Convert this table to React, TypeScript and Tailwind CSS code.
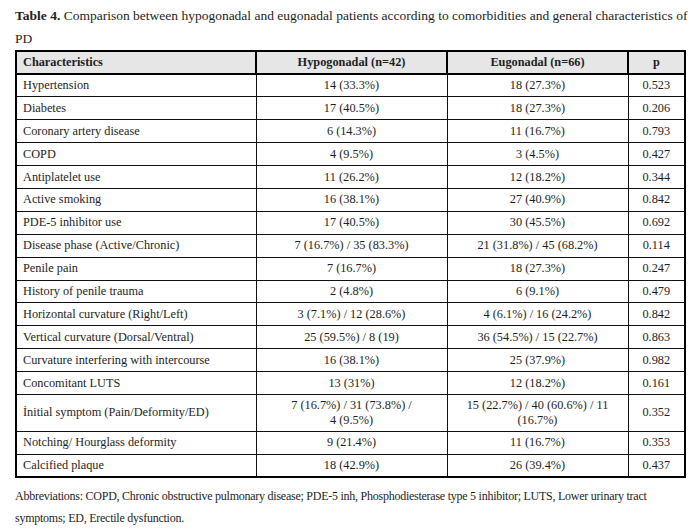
import React from "react";

type Row = [string, React.ReactNode, React.ReactNode, string];

const rows: Row[] = [
  ["Hypertension", "14 (33.3%)", "18 (27.3%)", "0.523"],
  ["Diabetes", "17 (40.5%)", "18 (27.3%)", "0.206"],
  ["Coronary artery disease", "6 (14.3%)", "11 (16.7%)", "0.793"],
  ["COPD", "4 (9.5%)", "3 (4.5%)", "0.427"],
  ["Antiplatelet use", "11 (26.2%)", "12 (18.2%)", "0.344"],
  ["Active smoking", "16 (38.1%)", "27 (40.9%)", "0.842"],
  ["PDE-5 inhibitor use", "17 (40.5%)", "30 (45.5%)", "0.692"],
  ["Disease phase (Active/Chronic)", "7 (16.7%) / 35 (83.3%)", "21 (31.8%) / 45 (68.2%)", "0.114"],
  ["Penile pain", "7 (16.7%)", "18 (27.3%)", "0.247"],
  ["History of penile trauma", "2 (4.8%)", "6 (9.1%)", "0.479"],
  ["Horizontal curvature (Right/Left)", "3 (7.1%) / 12 (28.6%)", "4 (6.1%) / 16 (24.2%)", "0.842"],
  ["Vertical curvature (Dorsal/Ventral)", "25 (59.5%) / 8 (19)", "36 (54.5%) / 15 (22.7%)", "0.863"],
  ["Curvature interfering with intercourse", "16 (38.1%)", "25 (37.9%)", "0.982"],
  ["Concomitant LUTS", "13 (31%)", "12 (18.2%)", "0.161"],
  [
    "İnitial symptom (Pain/Deformity/ED)",
    <>7 (16.7%) / 31 (73.8%) /<br />4 (9.5%)</>,
    <>15 (22.7%) / 40 (60.6%) / 11<br />(16.7%)</>,
    "0.352",
  ],
  ["Notching/ Hourglass deformity", "9 (21.4%)", "11 (16.7%)", "0.353"],
  ["Calcified plaque", "18 (42.9%)", "26 (39.4%)", "0.437"],
];

export default function App() {
  return (
    <div
      className="w-[700px] h-[531px] bg-white text-[#1e1e1e] pl-[15px] pt-[4px]"
      style={{ fontFamily: '"Liberation Serif", "Times New Roman", serif' }}
    >
      <p className="w-[678px] text-[13.5px] leading-[23px]">
        <span className="font-bold">Table 4.</span> Comparison between hypogonadal and eugonadal patients according to comorbidities and general characteristics of PD
      </p>
      <table className="mt-0 w-[669px] border-collapse border-2 border-black text-[12.3px] table-fixed">
        <colgroup>
          <col className="w-[240px]" />
          <col className="w-[191px]" />
          <col className="w-[181px]" />
          <col className="w-[57px]" />
        </colgroup>
        <thead>
          <tr className="bg-[#e6e6e6] font-bold">
            <th className="border-2 border-black h-[23px] px-[6px] text-left leading-[15px]">Characteristics</th>
            <th className="border-2 border-black px-[6px] text-center leading-[15px]">Hypogonadal (n=42)</th>
            <th className="border-2 border-black px-[6px] text-center leading-[15px]">Eugonadal (n=66)</th>
            <th className="border-2 border-black px-[6px] text-center leading-[15px]">p</th>
          </tr>
        </thead>
        <tbody>
          {rows.map((r, i) => (
            <tr key={i}>
              <td className="border border-[#111] h-[22.9px] px-[6px] py-[3px] text-left leading-[15px]">{r[0]}</td>
              <td className="border border-[#111] px-[6px] py-[3px] text-center leading-[15px]">{r[1]}</td>
              <td className="border border-[#111] px-[6px] py-[3px] text-center leading-[15px]">{r[2]}</td>
              <td className="border border-[#111] px-[6px] py-[3px] text-center leading-[15px]">{r[3]}</td>
            </tr>
          ))}
        </tbody>
      </table>
      <p className="mt-[7px] w-[678px] text-[12px] tracking-[-0.25px] leading-[22px]">
        Abbreviations: COPD, Chronic obstructive pulmonary disease; PDE-5 inh, Phosphodiesterase type 5 inhibitor; LUTS, Lower urinary tract symptoms; ED, Erectile dysfunction.
      </p>
    </div>
  );
}
